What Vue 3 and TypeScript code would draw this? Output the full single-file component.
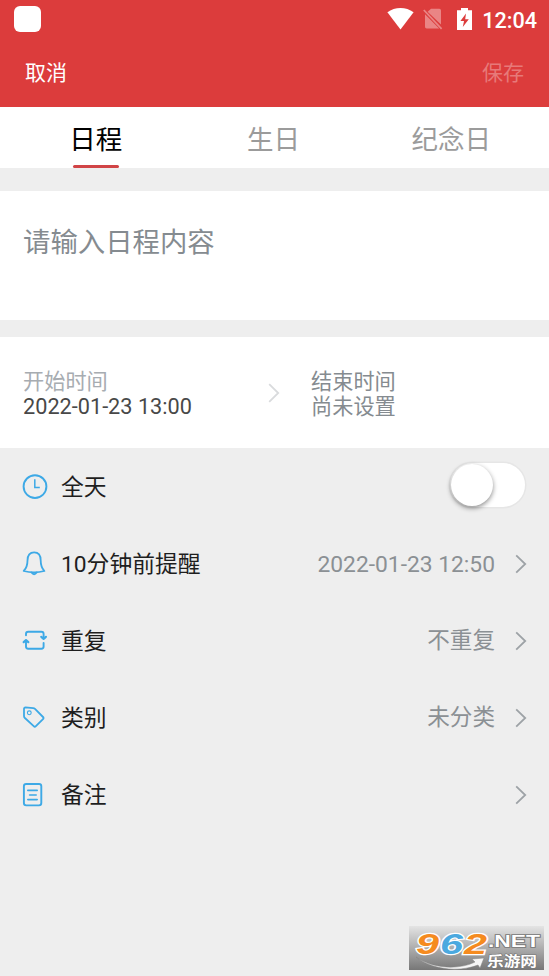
<script setup lang="ts">
import { ref } from 'vue'

interface Row {
  icon: 'clock' | 'bell' | 'repeat' | 'tag' | 'note'
  label: string
  value?: string
  toggle?: boolean
}

const tabs: string[] = ['日程', '生日', '纪念日']
const activeTab = ref(0)
const allDay = ref(false)

const rows: Row[] = [
  { icon: 'clock', label: '全天', toggle: true },
  { icon: 'bell', label: '10分钟前提醒', value: '2022-01-23 12:50' },
  { icon: 'repeat', label: '重复', value: '不重复' },
  { icon: 'tag', label: '类别', value: '未分类' },
  { icon: 'note', label: '备注' },
]
</script>

<template>
  <div class="screen">
    <header class="header">
      <div class="status">
        <span class="app-dot"></span>
        <div class="status-right">
          <svg class="wifi" viewBox="0 0 27 22" width="27" height="22">
            <path d="M0.4 4.3C8 -1.4 19 -1.4 26.6 4.3L13.5 21.6Z" fill="#fff" />
          </svg>
          <svg class="sim" viewBox="0 0 20 22" width="20" height="22">
            <path d="M8 .8h8.4q1.6 0 1.6 1.6v14.2L4.6 3.8zM2 6.2L16.2 20.4H3.6Q2 20.4 2 18.8z" fill="#ea8585" />
            <path d="M.8 2L18.6 20.8" stroke="#ea8585" stroke-width="1.7" />
          </svg>
          <svg class="battery" viewBox="0 0 15 22" width="15" height="22">
            <path d="M4 0h7v2.2h4V22H0V2.2h4z" fill="#fff" />
            <path d="M9 5.4L3.4 13H7L5.8 19L11.8 11.2H8.2z" fill="#dc3c3c" />
          </svg>
          <span class="time">12:04</span>
        </div>
      </div>
      <div class="actions">
        <span class="cancel">取消</span>
        <span class="save">保存</span>
      </div>
    </header>

    <nav class="tabs">
      <button
        v-for="(tab, i) in tabs"
        :key="tab"
        class="tab"
        :class="{ active: i === activeTab }"
        @click="activeTab = i"
      >
        <span>{{ tab }}</span>
      </button>
    </nav>

    <section class="content">请输入日程内容</section>

    <section class="times">
      <div class="time-col start">
        <span class="caption">开始时间</span>
        <span class="date">2022-01-23 13:00</span>
      </div>
      <svg class="divider" viewBox="0 0 12 20" width="12" height="20">
        <path d="M1.2 1.2L10.2 10L1.2 18.8" fill="none" stroke="#d9dbdd" stroke-width="1.8" />
      </svg>
      <div class="time-col end">
        <span>结束时间</span>
        <span>尚未设置</span>
      </div>
    </section>

    <section class="rows">
      <div v-for="row in rows" :key="row.label" class="row">
        <svg class="icon" viewBox="0 0 26 26" width="26" height="26" fill="none" stroke="#3da9e6" stroke-width="1.9" stroke-linecap="round" stroke-linejoin="round">
          <template v-if="row.icon === 'clock'">
            <circle cx="13" cy="12.6" r="11.4" />
            <path d="M12.8 5.2V13.6H17.8" stroke-width="1.5" stroke-linecap="butt" stroke-linejoin="miter" />
          </template>
          <template v-else-if="row.icon === 'bell'">
            <path d="M1.7 20C4.7 16.9 5.5 14.6 5.5 9.4C5.5 4.2 8 1.3 12.1 1.3S18.7 4.2 18.7 9.4C18.7 14.6 19.5 16.9 22.4 20C16 21.6 8 21.6 1.7 20Z" stroke-width="1.8" />
            <path d="M9.5 21.5Q12.1 25 14.7 21.5" stroke-width="1.8" />
          </template>
          <template v-else-if="row.icon === 'repeat'">
            <path d="M4 7.2V6Q4 3.8 6.2 3.8H19.4Q21.6 3.8 21.6 6V9.6M21.6 15V18.6Q21.6 20.8 19.4 20.8H6.2Q4 20.8 4 18.6V12.8" />
            <path d="M19.3 8.8L21.6 10.8L23.9 8.8M1.7 14.2L4 12.2L6.3 14.2" stroke-width="2.2" />
          </template>
          <template v-else-if="row.icon === 'tag'">
            <path d="M2 4Q2 2.4 3.5 2.4L11.2 3.1Q12.2 3.2 13 3.9L21 12Q22.1 13.1 21 14.2L13.9 21.2Q12.8 22.3 11.7 21.2L2.9 13Q2 12.1 2 10.9Z" stroke-width="1.8" />
            <circle cx="7.3" cy="7.8" r="1.9" stroke-width="1.1" />
          </template>
          <template v-else>
            <rect x="1.9" y="2" width="17.4" height="21.4" rx="2.3" />
            <path d="M5.8 8.4H15.2M7.6 13H14.2M5.8 17.6H15.2" stroke-width="1.6" />
          </template>
        </svg>
        <span class="label">{{ row.label }}</span>
        <button v-if="row.toggle" class="switch" :class="{ on: allDay }" @click="allDay = !allDay">
          <span class="knob"></span>
        </button>
        <template v-else>
          <span class="value" :class="{ cjk: row.icon !== 'bell' }">{{ row.value }}</span>
          <svg class="chevron" viewBox="0 0 12 20" width="12" height="20">
            <path d="M1.2 1.4L10.2 10L1.2 18.6" fill="none" stroke="#9da2a6" stroke-width="1.8" />
          </svg>
        </template>
      </div>
    </section>

    <svg class="badge" viewBox="0 0 135 44" width="135" height="44">
      <defs>
        <linearGradient id="badge-bg" x1="0" y1="0" x2="0" y2="1">
          <stop offset="0" stop-color="#e4e4e4" />
          <stop offset="1" stop-color="#777" />
        </linearGradient>
      </defs>
      <rect width="135" height="44" fill="url(#badge-bg)" />
      <path d="M7 31C24 43 50 44 66 36L63 33L75 32L71 42L69 39C48 47 22 43 7 31Z" fill="#f6f6f6" stroke="#858585" stroke-width=".5" />
      <g class="digits">
        <text x="7" y="27.5" textLength="23" lengthAdjust="spacingAndGlyphs" fill="#f58b1f">9</text>
        <text x="31" y="27.5" textLength="23" lengthAdjust="spacingAndGlyphs" fill="#4ba9df">6</text>
        <text x="55" y="27.5" textLength="23" lengthAdjust="spacingAndGlyphs" fill="#f58b1f">2</text>
      </g>
      <text class="net" x="79" y="20.5" textLength="52" lengthAdjust="spacingAndGlyphs">.NET</text>
      <text class="name" x="78" y="39.5" textLength="50" lengthAdjust="spacingAndGlyphs">乐游网</text>
    </svg>
  </div>
</template>

<style>
body {
  margin: 0;
  background: #eee;
}
</style>

<style scoped>
.screen {
  position: relative;
  width: 549px;
  height: 976px;
  overflow: hidden;
  background: #eee;
  font-family: Roboto, 'Noto Sans CJK SC', sans-serif;
}
button {
  padding: 0;
  border: 0;
  background: none;
  font: inherit;
}
.header {
  height: 107px;
  background: #dc3c3c;
  color: #fff;
}
.status {
  display: flex;
  justify-content: space-between;
  align-items: center;
  height: 38px;
  padding: 0 12px 0 14px;
}
.app-dot {
  width: 27px;
  height: 26px;
  border-radius: 6px;
  background: #fff;
}
.status-right {
  display: flex;
  align-items: center;
}
.sim {
  margin-left: 9px;
}
.battery {
  margin-left: 14px;
}
.time {
  margin: 4px 0 0 10px;
  font-size: 21.6px;
  font-weight: 500;
  line-height: 26px;
}
.actions {
  display: flex;
  justify-content: space-between;
  padding: 19px 25px 0;
  font-size: 21px;
  line-height: 32px;
}
.save {
  color: #e77979;
}
.tabs {
  display: flex;
  height: 61px;
  padding: 0 9px 0 7px;
  background: #fff;
}
.tab {
  display: flex;
  flex: 1;
  justify-content: center;
  position: relative;
  color: #9b9b9b;
  font-size: 26.5px;
  line-height: 65px;
}
.tab.active {
  color: #000;
}
.tab.active::after {
  content: '';
  position: absolute;
  bottom: 0;
  width: 46px;
  height: 3px;
  border-radius: 2px;
  background: #d14446;
}
.content {
  box-sizing: border-box;
  height: 129px;
  margin-top: 23px;
  padding: 32px 23px;
  background: #fff;
  color: #858b90;
  font-size: 27.4px;
  line-height: 40px;
}
.times {
  display: flex;
  align-items: center;
  height: 111px;
  margin-top: 17px;
  padding: 0 23px;
  background: #fff;
  color: #858b90;
  font-size: 21.2px;
}
.time-col {
  display: flex;
  flex-direction: column;
  padding-top: 3px;
  line-height: 25.5px;
}
.start {
  width: 245px;
}
.caption {
  color: #a7acb1;
}
.date {
  color: #484848;
  font-size: 21.7px;
}
.end {
  margin-left: 31px;
}
.row {
  display: flex;
  align-items: center;
  box-sizing: border-box;
  height: 77px;
  padding: 0 22px;
}
.label {
  margin-left: 13px;
  padding-top: 2px;
  color: #1e1e1e;
  font-size: 22.8px;
  line-height: 34px;
}
.value {
  margin-left: auto;
  padding-top: 2px;
  color: #8b9094;
  font-size: 22.8px;
  line-height: 34px;
}
.value.cjk {
  padding-top: 0;
  font-size: 22.6px;
}
.chevron {
  margin-left: 20px;
}
.switch {
  width: 75px;
  height: 44px;
  margin: 0 2px 3px auto;
  border-radius: 22px;
  background: #fff;
  box-shadow: 0 0 0 1.5px #e6e6e6;
}
.knob {
  display: block;
  width: 42px;
  height: 42px;
  margin-left: 1px;
  border-radius: 50%;
  background: #fff;
  box-shadow: 0 2px 5px rgba(0, 0, 0, 0.45);
}
.switch.on .knob {
  margin-left: 32px;
}
.badge {
  position: absolute;
  right: 5px;
  bottom: 6px;
  overflow: visible;
}
.digits {
  font: italic 700 30px 'Liberation Sans', sans-serif;
  stroke: #fff;
  stroke-width: 2.4px;
  paint-order: stroke;
}
.net {
  font: 700 17px 'Liberation Sans', sans-serif;
  fill: #fff;
  stroke: #777;
  stroke-width: 1.6px;
  paint-order: stroke;
}
.name {
  font: 700 14px 'Noto Sans CJK SC', sans-serif;
  fill: #fff;
  stroke: #777;
  stroke-width: 1.2px;
  paint-order: stroke;
}
</style>
